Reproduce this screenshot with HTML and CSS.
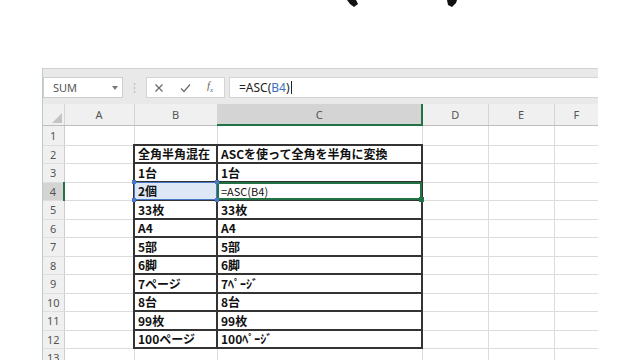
FILE: index.html
```html
<!DOCTYPE html>
<html lang="ja">
<head>
    <meta charset="UTF-8">
    <meta name="viewport" content="width=device-width, initial-scale=1.0">
    <title>ASC関数</title>
    <link rel="stylesheet" href="styles.css">
</head>
<body>

    <div class="top">
        <svg class="marks" width="640" height="10" viewBox="0 0 640 10">
            <polygon points="347,0 356,0 358,4 354,7 350,4"/>
            <polygon points="447,0 457,0 456,3 452,7 448,5"/>
        </svg>
    </div>

    <div class="excel">
        <div class="fbar">
            <div class="namebox">
                <span>SUM</span>
                <svg width="6" height="4" viewBox="0 0 6 4"><polygon points="0,0 6,0 3,4" fill="#777"/></svg>
            </div>
            <div class="grip">
                <svg width="3" height="12" viewBox="0 0 3 12"><circle cx="1.5" cy="2" r="0.8"/><circle cx="1.5" cy="6" r="0.8"/><circle cx="1.5" cy="10" r="0.8"/></svg>
            </div>
            <div class="fxbox">
                <svg width="10" height="10" viewBox="0 0 10 10"><path d="M1.5 1.5 L8.5 8.5 M8.5 1.5 L1.5 8.5"/></svg>
                <svg width="11" height="10" viewBox="0 0 11 10"><path d="M1 5.5 L4 8.5 L10 1.5"/></svg>
                <span class="fx">f<sub>x</sub></span>
            </div>
            <div class="formula">=ASC(<span class="ref">B4</span>)<span class="caret"></span></div>
        </div>

        <table class="sheet">
            <colgroup>
                <col class="c-rh">
                <col class="c-a">
                <col class="c-b">
                <col class="c-c">
                <col class="c-d">
                <col class="c-e">
                <col class="c-f">
            </colgroup>
            <tr class="hdr">
                <th class="corner"><svg width="10" height="10" viewBox="0 0 10 10"><polygon points="10,0 10,10 0,10" fill="#c4c4c4"/></svg></th>
                <th>A</th><th>B</th><th class="on">C</th><th>D</th><th>E</th><th>F</th>
            </tr>
            <tr class="r1"><th>1</th><td></td><td></td><td></td><td></td><td></td><td></td></tr>
            <tr class="r2"><th>2</th><td></td><td class="t">全角半角混在</td><td class="t">ASCを使って全角を半角に変換</td><td></td><td></td><td></td></tr>
            <tr class="r3"><th>3</th><td></td><td class="t">1台</td><td class="t">1台</td><td></td><td></td><td></td></tr>
            <tr class="r2"><th class="on">4</th><td></td>
                <td class="t refcell">2個<span class="h h1"></span><span class="h h2"></span><span class="h h3"></span><span class="h h4"></span></td>
                <td class="t active">=ASC(B4)<span class="fill"></span></td><td></td><td></td><td></td></tr>
            <tr class="r3"><th>5</th><td></td><td class="t">33枚</td><td class="t">33枚</td><td></td><td></td><td></td></tr>
            <tr class="r2"><th>6</th><td></td><td class="t">A4</td><td class="t">A4</td><td></td><td></td><td></td></tr>
            <tr class="r3"><th>7</th><td></td><td class="t">5部</td><td class="t">5部</td><td></td><td></td><td></td></tr>
            <tr class="r2"><th>8</th><td></td><td class="t">6脚</td><td class="t">6脚</td><td></td><td></td><td></td></tr>
            <tr class="r3"><th>9</th><td></td><td class="t">7ページ</td><td class="t">7ﾍﾟｰｼﾞ</td><td></td><td></td><td></td></tr>
            <tr class="r2"><th>10</th><td></td><td class="t">8台</td><td class="t">8台</td><td></td><td></td><td></td></tr>
            <tr class="r3"><th>11</th><td></td><td class="t">99枚</td><td class="t">99枚</td><td></td><td></td><td></td></tr>
            <tr class="r2"><th>12</th><td></td><td class="t">100ページ</td><td class="t">100ﾍﾟｰｼﾞ</td><td></td><td></td><td></td></tr>
            <tr class="r3"><th>13</th><td></td><td></td><td></td><td></td><td></td><td></td></tr>
        </table>
    </div>

</body>
</html>
```

FILE: styles.css
```css
body {
    margin: 0;
    background: #fff;
    font-family: "Noto Sans", sans-serif;
    overflow: hidden;
}
.top {
    height: 68px;
}
.marks {
    display: block;
}
.marks polygon {
    fill: #111;
}
.excel {
    width: 555px;
    margin-left: 42px;
    border-left: 1px solid #b7cdbd;
}
.fbar {
    box-sizing: border-box;
    height: 36px;
    padding-top: 8px;
    background: #e9e9e9;
    border-top: 1px solid #d2d2d2;
    display: flex;
    align-items: flex-start;
}
.namebox {
    box-sizing: border-box;
    width: 80px;
    height: 21px;
    background: #fff;
    border: 1px solid #cdcdcd;
    display: flex;
    align-items: center;
    justify-content: space-between;
    padding: 0 4px 0 9px;
    font-size: 11px;
    color: #555;
}
.grip {
    width: 23px;
    height: 21px;
    display: flex;
    align-items: center;
    justify-content: center;
}
.grip circle {
    fill: #a8a8a8;
}
.fxbox {
    box-sizing: border-box;
    width: 79px;
    height: 21px;
    background: #fff;
    border: 1px solid #d4d4d4;
    display: flex;
    align-items: center;
    gap: 16px;
    padding-left: 7px;
}
.fxbox path {
    fill: none;
    stroke: #6e6e6e;
    stroke-width: 1.3;
}
.fx {
    font-family: "Liberation Serif", serif;
    font-style: italic;
    font-size: 11px;
    color: #666;
    line-height: 1;
}
.fx sub {
    font-size: 7px;
}
.formula {
    box-sizing: border-box;
    flex: 1;
    height: 21px;
    margin-left: 4px;
    background: #fff;
    border: 1px solid #d4d4d4;
    border-right: none;
    padding-left: 9px;
    font-size: 12px;
    line-height: 19px;
    color: #222;
    display: flex;
    align-items: center;
}
.ref {
    color: #3b6fc4;
}
.caret {
    width: 1px;
    height: 13px;
    background: #222;
    margin-left: 1px;
}
.sheet {
    width: 555px;
    border-collapse: collapse;
    table-layout: fixed;
}
.c-rh { width: 21px; }
.c-a { width: 70px; }
.c-b { width: 83px; }
.c-c { width: 205px; }
.c-d { width: 66px; }
.c-e { width: 66px; }
.c-f { width: 44px; }
.sheet th {
    background: #f0f0f0;
    font-weight: normal;
    font-size: 11px;
    color: #555;
    padding: 0;
    text-align: center;
    border-right: 1px solid #cdcdcd;
    border-bottom: 1px solid #dedede;
}
.sheet .hdr {
    height: 21px;
}
.sheet .hdr th {
    border-bottom: 1px solid #bdbdbd;
    border-right: 1px solid #d4d4d4;
}
.sheet .hdr th:last-child {
    border-right: none;
}
.sheet .hdr th.on {
    background: #d4d4d4;
    border-bottom: 2px solid #217346;
}
.sheet .corner {
    text-align: right;
    vertical-align: bottom;
}
.sheet .corner svg {
    display: block;
    margin: 0 2px 2px auto;
}
.sheet th.on {
    background: #d4d4d4;
    border-right: 2px solid #217346;
}
.r1 { height: 20px; }
.r2 { height: 18px; }
.r3 { height: 19px; }
.sheet td {
    padding: 0 3px;
    border-right: 1px solid #dcdcdc;
    border-bottom: 1px solid #dcdcdc;
    font-family: "Noto Sans CJK JP", sans-serif;
    font-size: 12px;
    font-weight: 700;
    line-height: 14px;
    color: #111;
    white-space: nowrap;
    overflow: hidden;
}
.sheet td:last-child {
    border-right: none;
}
.sheet td.t {
    border: 2px solid #333;
}
.refcell {
    position: relative;
    background: #dde7f5;
    overflow: visible !important;
}
.refcell::after {
    content: "";
    position: absolute;
    inset: -1px;
    border: 1px solid #4a78c8;
}
.h {
    position: absolute;
    width: 4px;
    height: 4px;
    background: #4a78c8;
    z-index: 2;
}
.h1 { left: -3px; top: -3px; }
.h2 { right: -3px; top: -3px; }
.h3 { left: -3px; bottom: -3px; }
.h4 { right: -3px; bottom: -3px; }
.sheet td.active {
    position: relative;
    font-weight: normal;
    font-size: 11px;
    overflow: visible;
}
.active::after {
    content: "";
    position: absolute;
    inset: -1px;
    border: 2px solid #217346;
}
.fill {
    position: absolute;
    right: -3px;
    bottom: -3px;
    width: 5px;
    height: 5px;
    background: #217346;
    z-index: 2;
}
```
